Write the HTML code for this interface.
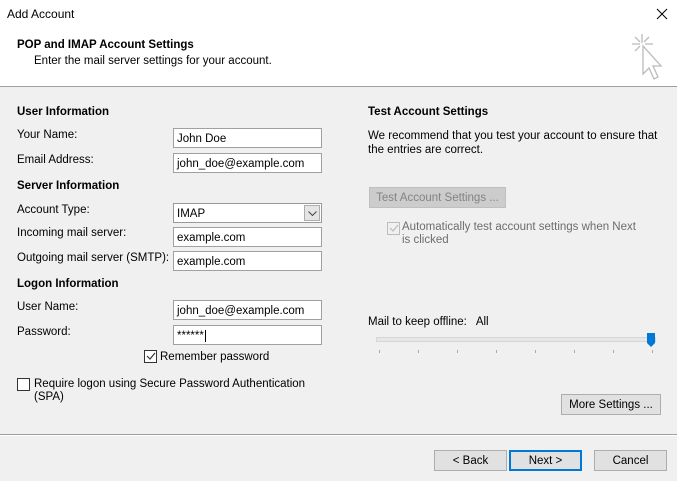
<!DOCTYPE html>
<html><head><style>
body{margin:0;width:677px;height:481px;background:#f0f0f0;font-family:"Liberation Sans",sans-serif;font-size:11.5px;color:#000;position:relative;overflow:hidden}
.a{position:absolute;white-space:nowrap}
.b{font-weight:bold}
.in{position:absolute;left:173px;width:149px;height:20px;background:#fff;border:1px solid #a0a0a0;box-sizing:border-box;padding:4px 3px 0;font-size:11.5px}
.btn{position:absolute;background:#e1e1e1;border:1px solid #adadad;box-sizing:border-box;text-align:center;line-height:20px;font-size:11.5px}
.cb{position:absolute;width:13px;height:13px;border:1px solid #333;background:#fff;box-sizing:border-box}
</style></head><body>
<div style="position:absolute;left:0;top:0;width:677px;height:86px;background:#fff;border-bottom:1px solid #a0a0a0"></div>
<div class="a" style="left:7px;top:7px;font-size:12px">Add Account</div>
<svg class="a" style="left:656px;top:8px" width="12" height="12"><path d="M1 1l10 10M11 1L1 11" stroke="#000" stroke-width="1"/></svg>
<div class="a b" style="left:17px;top:39px;font-size:11.5px">POP and IMAP Account Settings</div>
<div class="a" style="left:34px;top:55px">Enter the mail server settings for your account.</div>
<svg class="a" style="left:628px;top:32px" width="40" height="52"><g stroke="#bbb" stroke-width="1.3" fill="none"><path d="M14 2v9M4 12h8M17 12h8M7 5l5 5M21 5l-5 5M7 19l5-5"/><path d="M15 14v28l6-6 5 11 4-2-5-11h8z" fill="#fff"/></g></svg>

<div class="a b" style="left:17px;top:106px">User Information</div>
<div class="a" style="left:17px;top:129px">Your Name:</div>
<div class="in" style="top:128px">John Doe</div>
<div class="a" style="left:17px;top:154px">Email Address:</div>
<div class="in" style="top:153px">john_doe@example.com</div>
<div class="a b" style="left:17px;top:180px">Server Information</div>
<div class="a" style="left:17px;top:204px">Account Type:</div>
<div class="in" style="top:203px;border-color:#999">IMAP<span style="position:absolute;right:1px;top:1px;width:16px;height:16px;border:1px solid #adadad;background:#e5e5e5;box-sizing:border-box"><svg style="position:absolute;left:3px;top:5px" width="9" height="5"><path d="M0.5 0.5l4 4 4-4" stroke="#444" fill="none"/></svg></span></div>
<div class="a" style="left:17px;top:227px">Incoming mail server:</div>
<div class="in" style="top:227px">example.com</div>
<div class="a" style="left:17px;top:252px">Outgoing mail server (SMTP):</div>
<div class="in" style="top:251px">example.com</div>
<div class="a b" style="left:17px;top:278px">Logon Information</div>
<div class="a" style="left:17px;top:301px">User Name:</div>
<div class="in" style="top:300px">john_doe@example.com</div>
<div class="a" style="left:17px;top:326px">Password:</div>
<div class="in" style="top:325px">******<span style="border-left:1px solid #000;margin-left:1px"> </span></div>
<div class="cb" style="left:144px;top:350px"></div>
<svg class="a" style="left:145px;top:351px" width="11" height="11"><path d="M2 5l3 3 5-6" stroke="#333" fill="none" stroke-width="1.2"/></svg>
<div class="a" style="left:160px;top:351px">Remember password</div>
<div class="cb" style="left:17px;top:378px"></div>
<div class="a" style="left:34px;top:378px;line-height:13px">Require logon using Secure Password Authentication<br>(SPA)</div>

<div class="a b" style="left:368px;top:106px">Test Account Settings</div>
<div class="a" style="left:368px;top:129px;line-height:14px">We recommend that you test your account to ensure that<br>the entries are correct.</div>
<div class="btn" style="left:369px;top:187px;width:137px;height:21px;background:#ccc;border-color:#bfbfbf;color:#838383">Test Account Settings ...</div>
<div class="cb" style="left:387px;top:222px;border-color:#bcbcbc;background:#f0f0f0"></div>
<svg class="a" style="left:388px;top:223px" width="11" height="11"><path d="M2 5l3 3 5-6" stroke="#bbb" fill="none" stroke-width="1.2"/></svg>
<div class="a" style="left:402px;top:221px;line-height:13px;color:#6d6d6d">Automatically test account settings when Next<br>is clicked</div>
<div class="a" style="left:368px;top:316px">Mail to keep offline:&nbsp;&nbsp; All</div>
<div style="position:absolute;left:376px;top:337px;width:278px;height:3px;background:#e7e7e7;border:1px solid #d6d6d6"></div>
<div style="position:absolute;left:647px;top:333px;width:8px;height:10px;background:#0078d7"></div>
<div style="position:absolute;left:647px;top:343px;width:0;height:0;border-left:4px solid transparent;border-right:4px solid transparent;border-top:4px solid #0078d7"></div>
<div style="position:absolute;left:379px;top:350px;width:274px;height:3px;background:repeating-linear-gradient(90deg,#aaa 0 1px,transparent 1px 39px)"></div>

<div class="btn" style="left:561px;top:394px;width:100px;height:21px">More Settings ...</div>
<div style="position:absolute;left:0;top:434px;width:677px;height:1px;background:#a0a0a0"></div>
<div style="position:absolute;left:0;top:435px;width:677px;height:1px;background:#fff"></div>
<div class="btn" style="left:434px;top:450px;width:73px;height:21px">&lt; Back</div>
<div class="btn" style="left:509px;top:450px;width:73px;height:21px;border:2px solid #0078d7;line-height:18px">Next &gt;</div>
<div class="btn" style="left:594px;top:450px;width:73px;height:21px">Cancel</div>
</body></html>
